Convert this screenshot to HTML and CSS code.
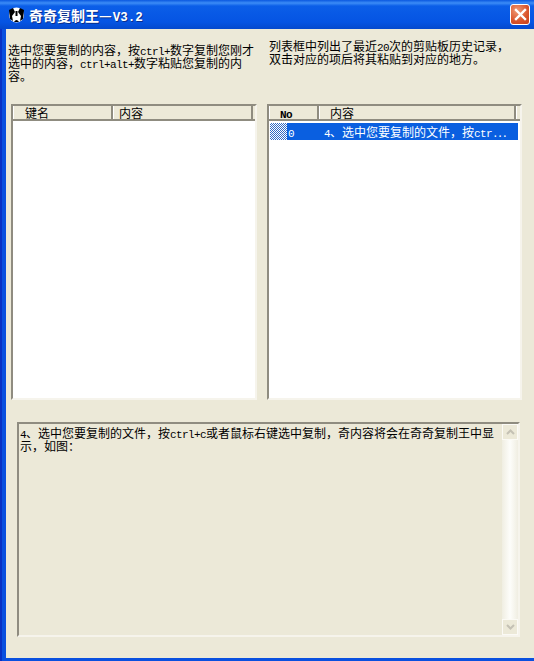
FILE: index.html
```html
<!DOCTYPE html>
<html>
<head>
    <title>奇奇复制王</title>
    <link rel="stylesheet" href="styles.css">
</head>
<body>
    <div class="window">
        <div class="titlebar">
            <svg class="app-icon" width="17" height="16" viewBox="0 0 17 16">
                <circle cx="8.5" cy="8" r="7.5" fill="#fff"/>
                <path d="M1 3 L5 1 L7 5 L4 9 L5 14 L2 12 Z" fill="#000"/>
                <path d="M16 3 L12 1 L10 5 L13 9 L12 14 L15 12 Z" fill="#000"/>
                <path d="M6 15 Q8.5 11 11 15 Z" fill="#000"/>
                <rect x="7.5" y="4" width="2" height="5" fill="#000"/>
            </svg>
            <span class="title">奇奇复制王—<span class="lat">V3.2</span></span>
            <button class="close-btn">
                <svg width="13" height="13" viewBox="0 0 13 13">
                    <path d="M2 2 L11 11 M11 2 L2 11" stroke="#fff" stroke-width="2.4" stroke-linecap="square"/>
                </svg>
            </button>
        </div>

        <div class="client">
            <div class="notes">
                <p class="note">选中您要复制的内容，按<span class="lat">ctrl+</span>数字复制您刚才选中的内容，<span class="lat">ctrl+alt+</span>数字粘贴您复制的内容。</p>
                <p class="note note-right">列表框中列出了最近<span class="lat">20</span>次的剪贴板历史记录，双击对应的项后将其粘贴到对应的地方。</p>
            </div>

            <div class="lists">
                <div class="listview list-left">
                    <div class="list-head">
                        <div class="col col-key">键名</div>
                        <div class="col col-content">内容</div>
                    </div>
                </div>
                <div class="listview list-right">
                    <div class="list-head">
                        <div class="col col-no"><span class="lat">No</span></div>
                        <div class="col col-text">内容</div>
                        <div class="col col-rest"></div>
                    </div>
                    <div class="list-row">
                        <div class="row-mark"></div>
                        <div class="row-no"><span class="lat">0</span></div>
                        <div class="row-text"><span class="lat">4</span>、选中您要复制的文件，按<span class="lat">ctr<span class="dots">...</span></span></div>
                    </div>
                </div>
            </div>

            <div class="memo">
                <div class="memo-text"><span class="lat">4</span>、选中您要复制的文件，按<span class="lat">ctrl+c</span>或者鼠标右键选中复制，奇内容将会在奇奇复制王中显示，如图：</div>
                <div class="scrollbar">
                    <div class="scroll-btn">
                        <svg width="9" height="6" viewBox="0 0 9 6"><path d="M1 5 L4.5 1.5 L8 5" fill="none" stroke="#c4c1b4" stroke-width="2"/></svg>
                    </div>
                    <div class="scroll-track"></div>
                    <div class="scroll-btn">
                        <svg width="9" height="6" viewBox="0 0 9 6"><path d="M1 1 L4.5 4.5 L8 1" fill="none" stroke="#c4c1b4" stroke-width="2"/></svg>
                    </div>
                </div>
            </div>
        </div>
    </div>
</body>
</html>
```

FILE: styles.css
```css
html, body {
    margin: 0;
    height: 100%;
}

body {
    font-family: "Noto Sans CJK SC", "Liberation Mono", monospace;
    font-size: 12px;
    color: #000;
    overflow: hidden;
}

.lat {
    font-family: "Liberation Mono", monospace;
    font-size: 11px;
    letter-spacing: -0.6px;
    line-height: 0;
}

.dots {
    letter-spacing: -1.9px;
}

.window {
    width: 534px;
    height: 661px;
    display: flex;
    flex-direction: column;
    background: linear-gradient(90deg, #0831c4 0 2px, #0a50df 2px);
}

.titlebar {
    height: 29px;
    flex: none;
    display: flex;
    align-items: center;
    padding: 0 4px 0 8px;
    background: linear-gradient(#0a58e0 0, #3c8cf6 3px, #0b5ee8 6px, #0554e3 22px, #0449cd 29px);
}

.app-icon {
    margin-right: 4px;
    margin-top: 1px;
}

.title {
    flex: 1;
    color: #fff;
    font-size: 14px;
    font-weight: bold;
    line-height: 14px;
    text-shadow: 1px 1px 0 #0a2f8e;
}

.title .lat {
    font-size: 12.5px;
    letter-spacing: 0;
    margin-left: 1px;
}

.close-btn {
    width: 20px;
    height: 21px;
    padding: 0;
    display: flex;
    align-items: center;
    justify-content: center;
    border: 1px solid #fff;
    border-radius: 3px;
    background: radial-gradient(circle at 35% 30%, #ef9a76, #d9532a 60%, #c6401c);
}

.client {
    flex: 1;
    min-height: 0;
    margin: 0 0 3px 6px;
    padding: 14px 0 0 2px;
    background: #ece9d8;
    display: flex;
    flex-direction: column;
}

.notes {
    display: flex;
    gap: 13px;
    height: 61px;
}

.note {
    margin: 0;
    width: 248px;
    line-height: 13px;
}

.note-right {
    width: 252px;
    margin-top: -4px;
}

.lists {
    display: flex;
    gap: 10px;
    height: 296px;
    margin-left: 3px;
}

.listview {
    box-sizing: border-box;
    background: #fff;
    border: 2px solid #8f8c80;
    border-right-color: #f6f4ec;
    border-bottom-color: #f6f4ec;
}

.list-left {
    width: 246px;
}

.list-right {
    width: 255px;
}

.list-head {
    display: flex;
    height: 13px;
    background: #ece9d8;
    border-bottom: 2px solid #8f8c80;
}

.col {
    box-sizing: border-box;
    line-height: 13px;
    border-right: 2px solid #8f8c80;
    border-left: 1px solid #fff;
}

.col-key {
    width: 100px;
    padding-left: 11px;
}

.col-content {
    flex: 1;
    padding-left: 5px;
    margin-right: 2px;
}

.col-no {
    width: 50px;
    padding-left: 10px;
    font-weight: bold;
}

.col-text {
    flex: 1;
    padding-left: 10px;
}

.col-rest {
    width: 4px;
    border-right: none;
}

.list-row {
    display: flex;
    height: 17px;
    margin: 2px 2px 0 1px;
    line-height: 17px;
    color: #fff;
}

.row-mark {
    width: 17px;
    background-color: #fff;
    background-image: conic-gradient(#316ac5 25%, transparent 0 50%, #316ac5 0 75%, transparent 0);
    background-size: 2px 2px;
}

.row-no {
    width: 37px;
    padding-left: 1px;
    box-sizing: border-box;
    background: #0a5fe0;
}

.row-text {
    flex: 1;
    background: #0a5fe0;
    white-space: nowrap;
}

.memo {
    box-sizing: border-box;
    display: flex;
    width: 503px;
    height: 215px;
    margin: 22px 0 0 9px;
    border: 2px solid #8f8c80;
    border-right-color: #f6f4ec;
    border-bottom-color: #f6f4ec;
}

.memo-text {
    flex: 1;
    padding: 2px 1px 0 1px;
    line-height: 13px;
}

.scrollbar {
    width: 16px;
    display: flex;
    flex-direction: column;
    background: #f6f5ef;
}

.scroll-btn {
    height: 16px;
    display: flex;
    align-items: center;
    justify-content: center;
    background: #ece9d8;
    border: 1px solid #fbfaf5;
    box-sizing: border-box;
}

.scroll-track {
    flex: 1;
    background: linear-gradient(90deg, #f0eee2, #fdfdfa 50%, #f0eee2);
}
```
